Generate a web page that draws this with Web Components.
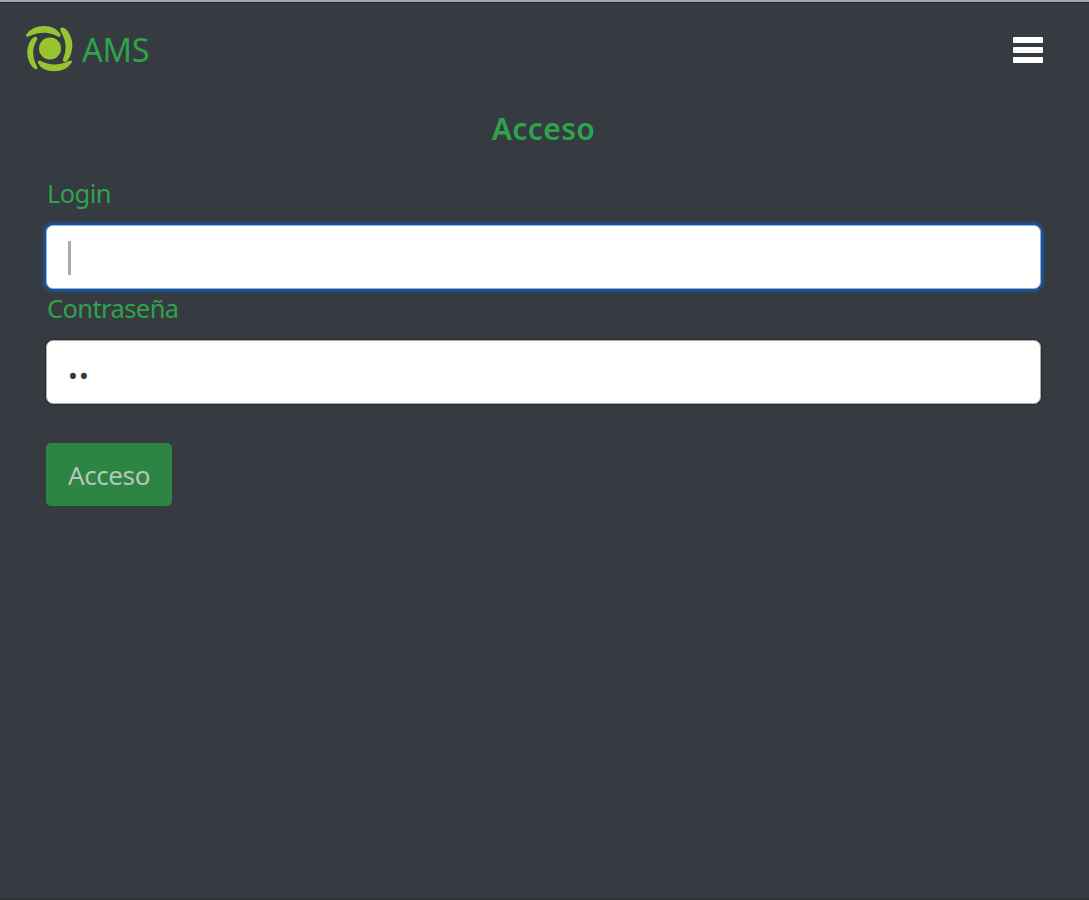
<!DOCTYPE html>
<html lang="es">
<head>
<meta charset="utf-8">
<title>AMS</title>
<style>
  body {
    margin: 0;
    background: #363b42;
    font-family: "Noto Sans", "Open Sans", sans-serif;
    color: #2fa34b;
  }
</style>
</head>
<body>
<ams-app>
  <ams-navbar>AMS</ams-navbar>
  <ams-login-form heading="Acceso">
    <ams-field label="Login" focused></ams-field>
    <ams-field label="Contraseña">••</ams-field>
    <ams-button>Acceso</ams-button>
  </ams-login-form>
</ams-app>
<script>
class AmsElement extends HTMLElement {
  constructor () {
    super();
    this.template = document.createElement('template');
  }
  connectedCallback () {
    if (this.shadowRoot) return;
    this.template.innerHTML = this.htmlTemplate;
    this.attachShadow({ mode: 'open' });
    this.shadowRoot.appendChild(this.template.content.cloneNode(true));
  }
}

class AmsApp extends AmsElement {
  get htmlTemplate () {
    return `<style>
        :host {
          display: block;
          box-sizing: border-box;
          height: 900px;
          overflow: hidden;
          border-top: 2px solid #a0a7ae;
          border-bottom: 1px solid #302f36;
          box-shadow: inset 0 1px 0 #23282e;
        }
      </style>
      <slot></slot>`;
  }
}

class AmsLogo extends AmsElement {
  get htmlTemplate () {
    return `<style>
        :host {
          display: block;
          width: 48px;
          height: 48px;
        }
        svg {
          display: block;
        }
      </style>
      <svg width="48" height="48" viewBox="0 0 48 48" fill="none" stroke="#98c52f" stroke-linecap="round" stroke-linejoin="round">
        <circle cx="25" cy="23.500" r="11" fill="#98c52f" stroke="none"/>
        <g fill="#98c52f" stroke-width="1.500">
          <path d="M2 9.600C6 4.500 12 1.800 19 1.800C25.500 1.800 31.500 4.300 34.800 9.300C35.200 10.600 34.500 11.400 33.300 10.800C26 6.500 16 5.600 7.500 9C5 10.200 3.500 11 2.300 10.900Q1.500 10.500 2 9.600Z"/>
          <path d="M36.700 3.200C39 3 41 5 42.700 7.500C47 14.500 47.500 23.500 44.300 31C43 34 41.500 36 39.700 36.300C38.500 36 38.300 35 39 33.600C42.300 25.500 42 16.500 38 9C36.500 6.300 35 4.300 36.700 3.200Z"/>
          <path d="M46 37.300C42 43 36 45.800 28.800 45.600C21.500 45.400 16 42.300 13.700 38C13.200 36.600 14.200 36 15.400 36.600C22 40.800 32 41.500 40.700 38.300C43 37.300 44.700 36.200 45.700 36.200Q46.500 36.500 46 37.300Z"/>
          <path d="M11.300 43.500C8.500 43 6.500 40 5 36.700C2.300 30.500 2.500 23 5.500 17.200C7 14.500 8.700 12.700 10.500 12.400C11.700 12.600 11.800 13.500 11.200 14.700C6.800 22 6.500 30.500 9.600 38.300C10.600 40.800 12.500 42.900 11.300 43.500Z"/>
        </g>
      </svg>`;
  }
}

class AmsNavbar extends AmsElement {
  get htmlTemplate () {
    return `<style>
        :host {
          display: flex;
          align-items: center;
          justify-content: space-between;
          box-sizing: border-box;
          height: 94px;
          padding: 0 30px 0 25px;
        }
        .brand {
          display: flex;
          align-items: center;
          gap: 9px;
          font-size: 32.500px;
          line-height: 48px;
          letter-spacing: -.3px;
        }
        .brand span {
          padding-top: 2px;
        }
        .toggler {
          display: flex;
          flex-direction: column;
          justify-content: center;
          align-items: center;
          gap: 4px;
          box-sizing: border-box;
          width: 66px;
          height: 52px;
          padding: 1px 0 0 3px;
          border: 1px solid #343940;
          border-radius: 5px;
          background: none;
        }
        .toggler i {
          width: 30px;
          height: 6px;
          border-radius: 1px;
          background: #fff;
        }
      </style>
      <div class="brand">
        <ams-logo></ams-logo>
        <span><slot></slot></span>
      </div>
      <button class="toggler" type="button"><i></i><i></i><i></i></button>`;
  }
}

class AmsLoginForm extends AmsElement {
  get htmlTemplate () {
    return `<style>
        :host {
          display: block;
          padding: 11px 48px 0 46px;
        }
        h1 {
          margin: 0 0 23px;
          text-align: center;
          font-size: 30px;
          line-height: 44px;
          font-weight: 600;
          letter-spacing: .4px;
        }
      </style>
      <h1>${this.getAttribute('heading')}</h1>
      <slot></slot>`;
  }
}

class AmsField extends AmsElement {
  get htmlTemplate () {
    return `<style>
        :host {
          display: block;
          height: 115px;
        }
        label {
          display: block;
          height: 51px;
          padding-left: 1px;
          box-sizing: border-box;
          font-size: 25.500px;
          line-height: 39px;
          letter-spacing: -.6px;
        }
        .control {
          display: flex;
          align-items: center;
          box-sizing: border-box;
          height: 64px;
          padding: 0 21px;
          border: 1px solid #a9acb0;
          border-radius: 7px;
          background: #fff;
          color: #343a40;
          font-size: 26px;
          box-shadow: 0 0 1px 1px #292d32;
        }
        .value {
          padding-top: 5px;
          letter-spacing: 1.200px;
        }
        :host([focused]) .control {
          border-color: #80b8f4;
          box-shadow: 0 0 2px 3px #22508a;
        }
        .caret {
          display: none;
          width: 3px;
          height: 34px;
          margin-top: 2px;
          background: #aaa;
        }
        :host([focused]) .caret {
          display: block;
        }
        :host([focused]) .value {
          display: none;
        }
      </style>
      <label>${this.getAttribute('label')}</label>
      <div class="control"><span class="value"><slot></slot></span><span class="caret"></span></div>`;
  }
}

class AmsButton extends AmsElement {
  get htmlTemplate () {
    return `<style>
        :host {
          display: block;
          padding-top: 39px;
        }
        button {
          display: block;
          width: 126px;
          height: 63px;
          padding: 1px 0 0;
          border: 0;
          border-radius: 5px;
          background: #2d8544;
          color: #b9c7bb;
          font: inherit;
          font-size: 26px;
          letter-spacing: -.4px;
        }
      </style>
      <button type="button"><slot></slot></button>`;
  }
}

window.customElements.define('ams-app', AmsApp);
window.customElements.define('ams-logo', AmsLogo);
window.customElements.define('ams-navbar', AmsNavbar);
window.customElements.define('ams-login-form', AmsLoginForm);
window.customElements.define('ams-field', AmsField);
window.customElements.define('ams-button', AmsButton);
</script>
</body>
</html>
